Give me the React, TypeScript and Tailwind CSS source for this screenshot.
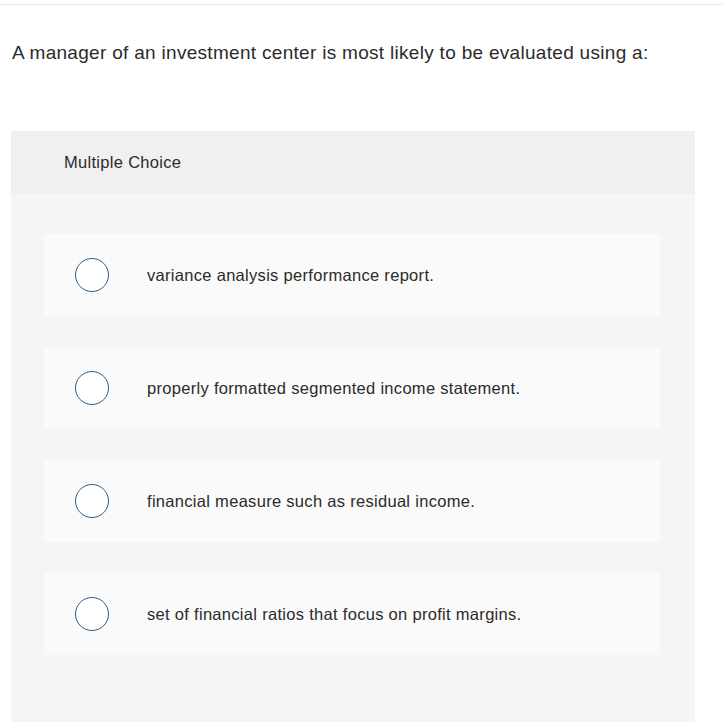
const options = [
  "variance analysis performance report.",
  "properly formatted segmented income statement.",
  "financial measure such as residual income.",
  "set of financial ratios that focus on profit margins.",
];

export default function App() {
  return (
    <div
      className="w-[724px] h-[722px] overflow-hidden bg-white text-[#2b2b2b] [font-variant-ligatures:none]"
      style={{ fontFamily: "'Liberation Sans', Arial, sans-serif" }}
    >
      <div className="h-[5px] bg-[#fcfcfc] border-b border-[#ececec]" />

      {/* Question */}
      <p className="pl-3 pt-[36px] text-[19px] leading-6 tracking-[0.3px]">
        A manager of an investment center is most likely to be evaluated using a:
      </p>

      {/* Answer panel */}
      <div className="mt-[66px] ml-[11px] w-[684px] rounded-t-[3px] bg-[#f5f5f5] h-[600px]">
        <div className="h-[63px] flex items-center pl-[53px] bg-[#f0f0f0] rounded-t-[3px] text-[16.5px] tracking-[0.3px]">
          Multiple Choice
        </div>

        <div className="pl-[33px] pt-[40px] flex flex-col gap-[31px]">
          {options.map((text) => (
            <div
              key={text}
              className="w-[616px] h-[82px] rounded-[4px] bg-[#fafafa] flex items-center"
            >
              <div className="ml-[31px] w-[34px] h-[34px] rounded-full border-[1.5px] border-[#2f5b87] bg-white shrink-0" />
              <span className="ml-[38px] text-[16.5px] tracking-[0.3px]">{text}</span>
            </div>
          ))}
        </div>
      </div>
    </div>
  );
}
